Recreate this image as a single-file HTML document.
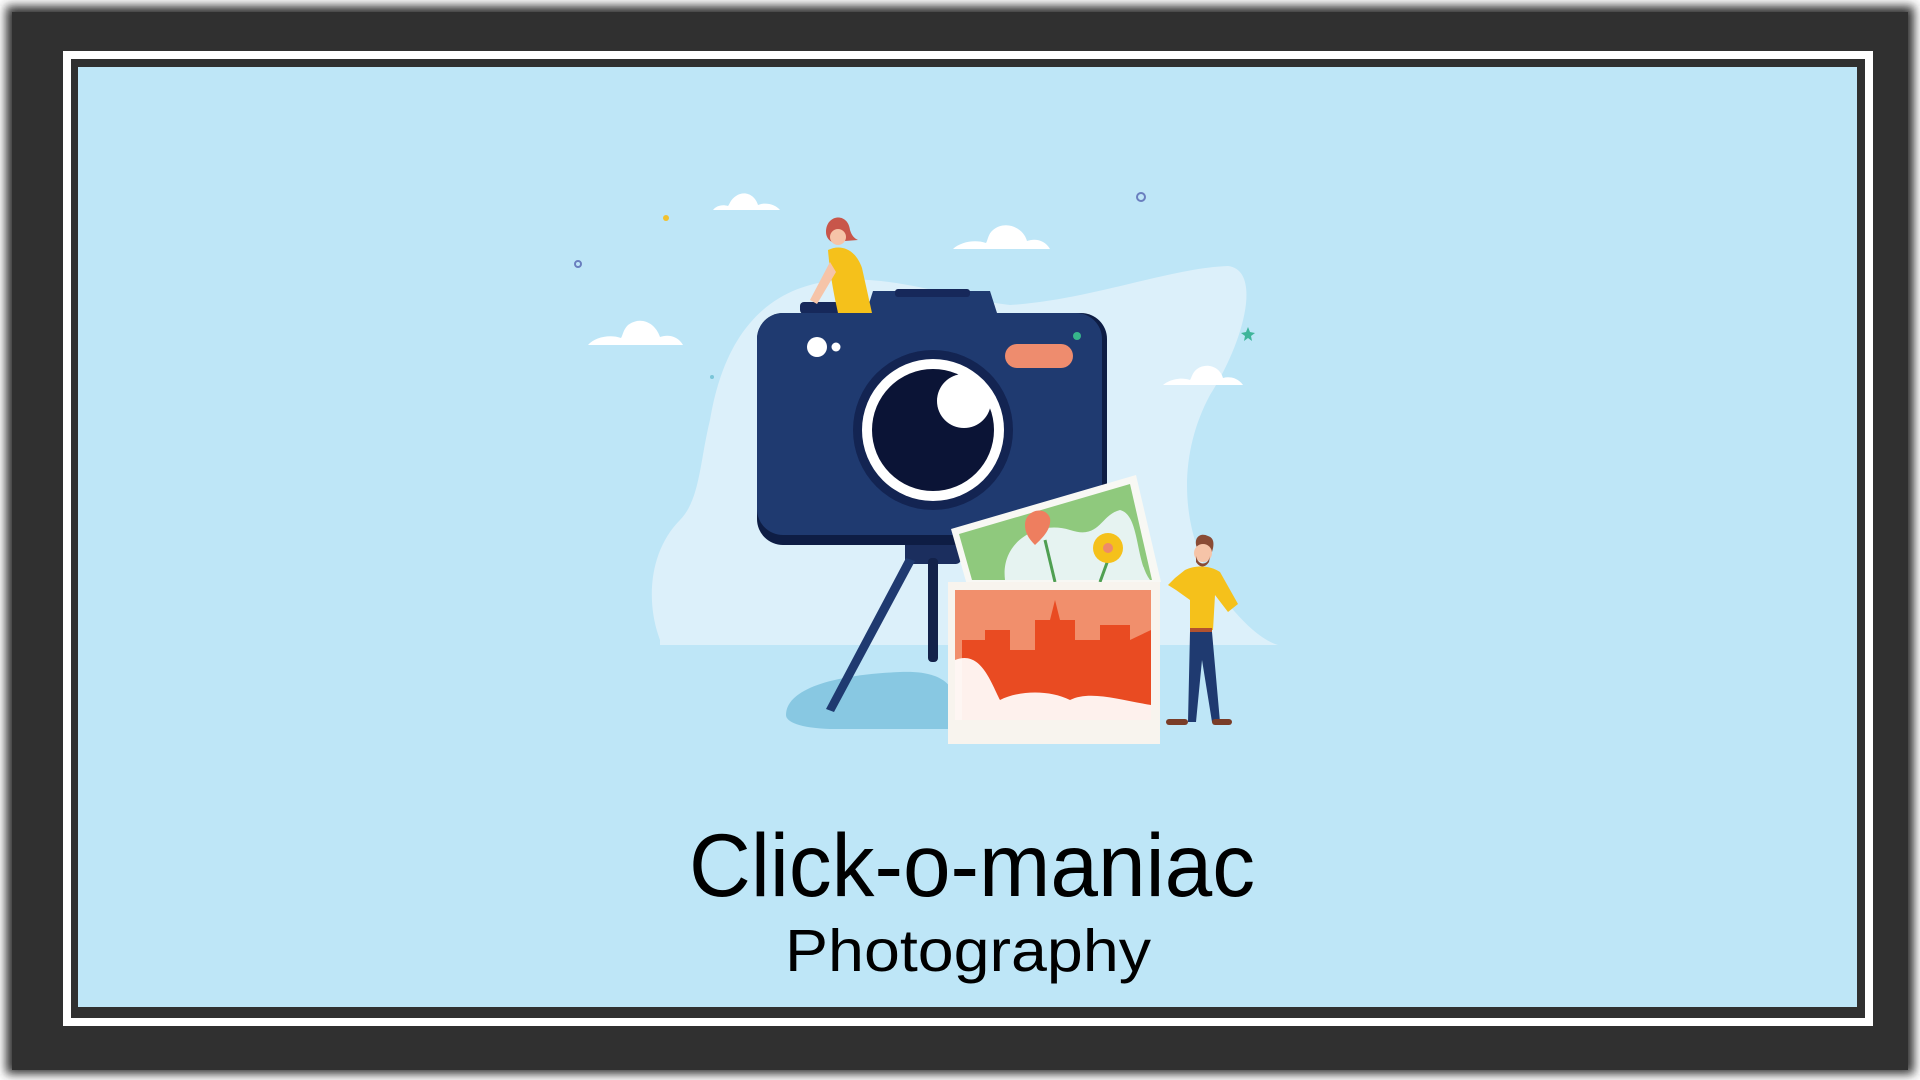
<!DOCTYPE html>
<html><head><meta charset="utf-8"><style>
html,body{margin:0;padding:0;width:1920px;height:1080px;overflow:hidden;background:#fff}
svg{display:block}
</style></head><body>
<svg width="1920" height="1080" viewBox="0 0 1920 1080" xmlns="http://www.w3.org/2000/svg">
<defs><filter id="b" x="-5%" y="-5%" width="110%" height="110%"><feGaussianBlur stdDeviation="5"/></filter></defs>
<rect x="6" y="6" width="1908" height="1068" fill="#303030" filter="url(#b)"/>
<rect x="12" y="12" width="1896" height="1058" fill="#303030"/>
<rect x="63" y="51" width="1810" height="975" fill="#fff"/>
<rect x="71" y="59" width="1794" height="959" fill="#303030"/>
<rect x="78" y="67" width="1779" height="940" fill="#bee6f7"/>
<!-- blob -->
<path d="M660 640 C645 600 650 550 680 520 C700 500 700 460 710 420 C725 330 770 285 840 280 C900 276 960 300 1010 305 C1090 300 1170 268 1228 266 C1262 270 1245 340 1210 395 C1175 460 1180 540 1225 600 C1245 625 1262 640 1278 645 L660 645 Z" fill="#dcf0fa"/>
<!-- clouds -->
<g fill="#fff">
<path d="M713 210 L780 210 C775 204 765 202 758 205 C755 195 745 190 736 196 C730 200 730 204 728 206 C722 204 716 206 713 210Z"/>
<path d="M953 249 L1050 249 C1045 240 1035 238 1027 241 C1023 227 1005 220 993 230 C988 234 988 240 986 243 C975 239 960 242 953 249Z"/>
<path d="M588 345 L683 345 C678 336 668 334 660 337 C655 322 640 316 628 325 C623 330 623 335 621 338 C610 334 595 337 588 345Z"/>
<path d="M1163 385 L1243 385 C1238 378 1230 376 1223 378 C1220 367 1207 362 1197 369 C1192 373 1192 377 1190 380 C1182 377 1170 379 1163 385Z"/>
</g>
<circle cx="1141" cy="197" r="4" fill="none" stroke="#6a7fbf" stroke-width="2"/>
<circle cx="578" cy="264" r="3" fill="none" stroke="#6a7fbf" stroke-width="2"/>
<circle cx="666" cy="218" r="3" fill="#f2c12e"/>
<circle cx="712" cy="377" r="2" fill="#7ac5d8"/>
<path d="M1248 327 l2 5 5 1 -4 3 1 5 -4 -3 -4 3 1 -5 -4 -3 5 -1z" fill="#3fb59a"/>
<!-- shadow -->
<path d="M786 715 C786 690 830 675 900 672 C950 670 960 690 960 729 L830 729 C800 728 786 722 786 715Z" fill="#88c8e2"/>
<!-- tripod -->
<rect x="905" y="540" width="56" height="24" rx="5" fill="#1b2e5e"/>
<path d="M906 558 L915 561 L834 712 L826 709Z" fill="#1f3a70"/>
<rect x="928" y="558" width="10" height="104" rx="4" fill="#13224a"/>
<!-- camera -->
<path d="M866 313 L873 291 L990 291 L997 313Z" fill="#1f3a70"/>
<rect x="895" y="289" width="75" height="8" rx="3" fill="#16285a"/>
<rect x="800" y="302" width="40" height="12" rx="4" fill="#16285a"/>
<rect x="757" y="313" width="350" height="232" rx="26" fill="#0e1d44"/>
<rect x="757" y="313" width="345" height="222" rx="26" fill="#1f3a70"/>
<circle cx="933" cy="430" r="80" fill="#132452"/>
<circle cx="933" cy="430" r="71" fill="#fff"/>
<circle cx="933" cy="430" r="61" fill="#0b1436"/>
<circle cx="964" cy="401" r="27" fill="#fff"/>
<rect x="1005" y="344" width="68" height="24" rx="12" fill="#ee8c6e"/>
<circle cx="817" cy="347" r="10" fill="#fff"/>
<circle cx="836" cy="347" r="4.5" fill="#fff"/>
<circle cx="1077" cy="336" r="4" fill="#37b58b"/>
<!-- woman -->
<path d="M826 232 C826 214 848 212 850 230 C852 236 854 238 858 240 L832 242 C828 240 826 236 826 232Z" fill="#c8564a"/>
<circle cx="838" cy="237" r="8" fill="#f6c4a8"/>
<path d="M828 250 C840 244 855 248 862 268 L872 313 L838 313 C834 295 830 275 828 250Z" fill="#f5c11b"/>
<path d="M830 262 L810 300 L817 304 L836 272Z" fill="#f6c4a8"/>
<!-- green photo -->
<path d="M951 529 L1136 475 L1161 582 L967 585Z" fill="#f8f8f4"/>
<path d="M959 534 L1130 484 L1152 580 L972 580Z" fill="#8fc97d"/>
<path d="M1005 580 C1000 540 1040 520 1070 530 C1100 540 1100 515 1120 510 C1140 515 1135 560 1150 580Z" fill="#e6f3f1"/>
<path d="M1045 540 L1055 582 M1108 560 L1100 582" stroke="#4f9f52" stroke-width="3"/>
<path d="M1025 525 C1025 510 1045 505 1050 518 C1052 530 1040 540 1035 545 C1028 538 1025 532 1025 525Z" fill="#ee7e5f"/>
<circle cx="1108" cy="548" r="15" fill="#f5c11b"/>
<circle cx="1108" cy="548" r="5" fill="#ee8a6a"/>
<!-- orange photo -->
<rect x="948" y="582" width="212" height="162" fill="#f8f4ee"/>
<rect x="955" y="590" width="196" height="130" fill="#f18f6c"/>
<path d="M962 720 L962 640 L985 640 L985 630 L1010 630 L1010 650 L1035 650 L1035 620 L1050 620 L1055 600 L1060 620 L1075 620 L1075 640 L1100 640 L1100 625 L1130 625 L1130 640 L1151 630 L1151 720Z" fill="#e94b22"/>
<path d="M955 660 C980 650 990 680 1000 700 C1020 690 1050 690 1070 700 C1090 690 1120 700 1151 705 L1151 720 L955 720Z" fill="#fff" opacity=".92"/>
<rect x="948" y="720" width="212" height="22" fill="#f8f4ee"/>
<!-- man -->
<path d="M1197 548 C1193 538 1200 532 1208 536 C1215 538 1214 546 1212 552Z" fill="#8a4b35"/>
<circle cx="1203" cy="553" r="9" fill="#f6c4a8"/>
<path d="M1196 556 C1198 566 1208 566 1210 556 L1209 562 C1205 568 1200 568 1196 562Z" fill="#8a4b35"/>
<path d="M1185 570 C1195 565 1210 565 1220 572 L1238 604 L1228 612 L1215 595 L1213 630 L1190 630 L1190 600 L1176 590 L1168 585 L1175 578Z" fill="#f5c11b"/>
<rect x="1190" y="628" width="22" height="5" fill="#b2522f"/>
<path d="M1190 632 L1212 632 L1220 722 L1212 722 L1202 660 L1196 722 L1188 722Z" fill="#1f3a70"/>
<rect x="1166" y="719" width="22" height="6" rx="3" fill="#7a3d28"/>
<rect x="1212" y="719" width="20" height="6" rx="3" fill="#7a3d28"/>
<!-- title -->
<text x="972" y="896" text-anchor="middle" font-family="Liberation Sans, sans-serif" font-size="89" fill="#000" textLength="566" lengthAdjust="spacingAndGlyphs">Click-o-maniac</text>
<text x="968" y="971" text-anchor="middle" font-family="Liberation Sans, sans-serif" font-size="59" fill="#000" textLength="366" lengthAdjust="spacingAndGlyphs">Photography</text>
</svg>
</body></html>
